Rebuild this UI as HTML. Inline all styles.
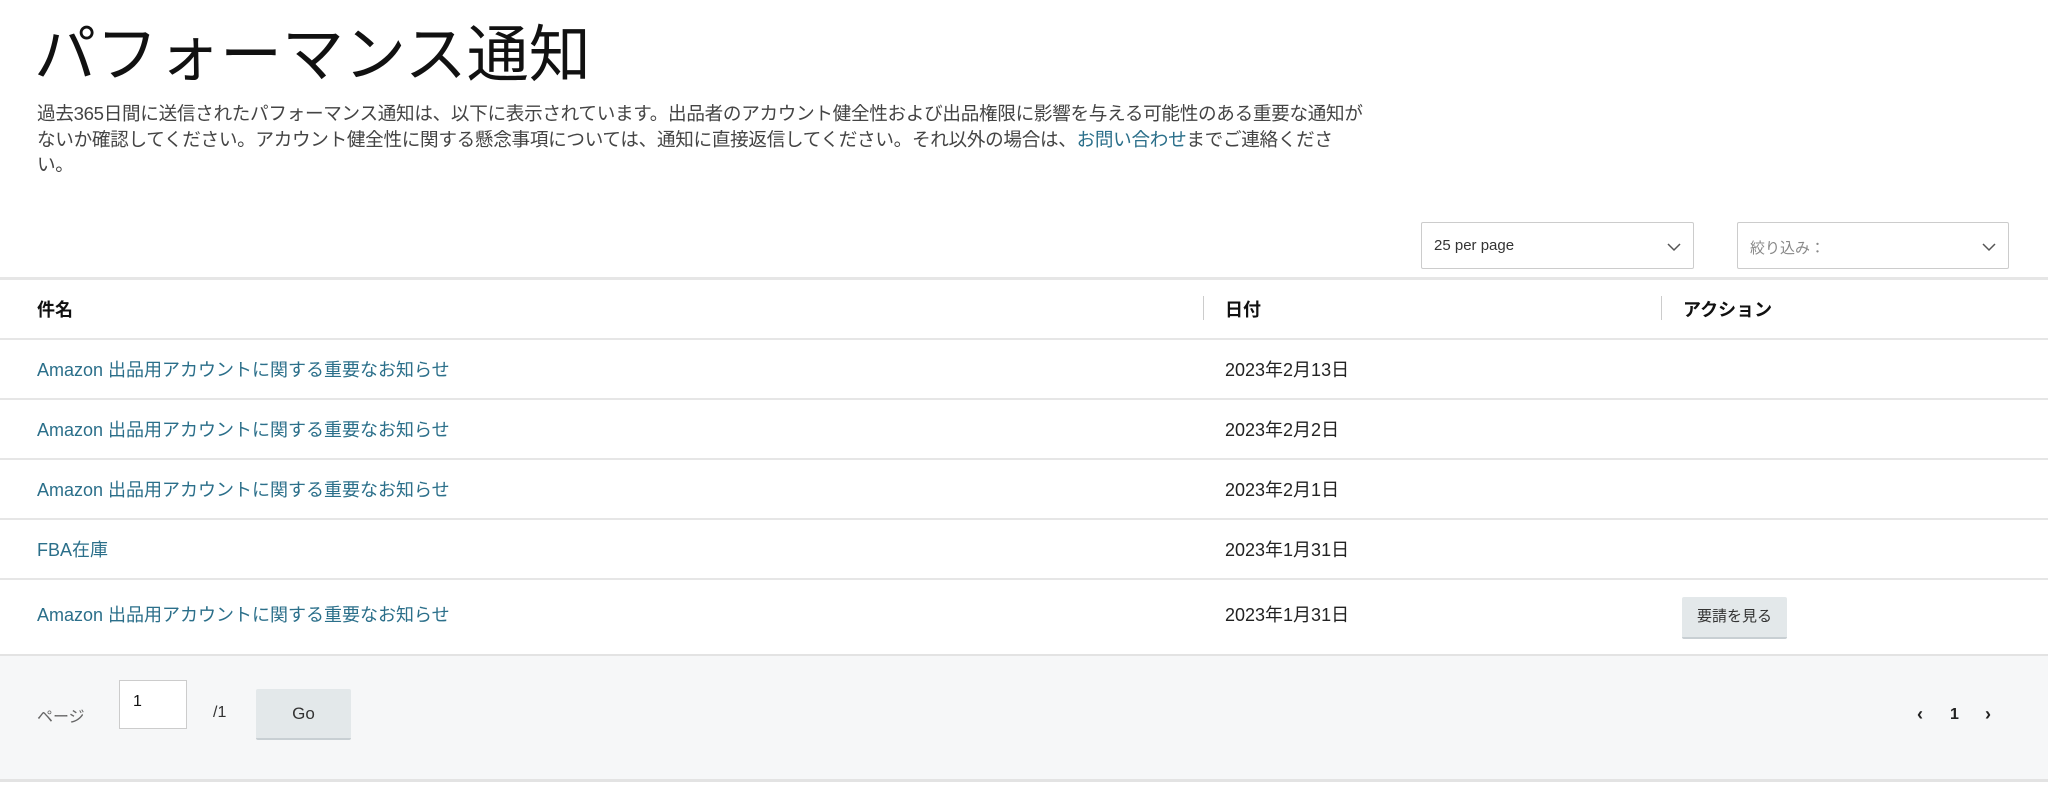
<!DOCTYPE html>
<html><head><meta charset="utf-8"><style>
*{box-sizing:border-box;margin:0;padding:0}
body{width:2048px;height:789px;background:#fff;font-family:"Liberation Sans","Noto Sans CJK JP",sans-serif;color:#111;position:relative;overflow:hidden}
.a{position:absolute}
h1{position:absolute;left:34px;top:4px;font-size:62px;font-weight:400;color:#111;white-space:nowrap}
.desc{left:37px;top:101px;font-size:18.6px;line-height:25.5px;color:#444;letter-spacing:-0.3px;white-space:nowrap}
.desc span{color:#2b6f8a}
.sel{border:1px solid #ccc;height:47px;font-size:15px;color:#333;padding:14px 12px;border-radius:2px}
.sel svg{position:absolute;right:12px;top:19px}
.hl{left:0;width:2048px;height:2px;background:#e6e6e6}
.row{font-size:18px;color:#2b6f8a;left:37px}
.dt{font-size:18px;color:#222;left:1225px}
.btn{background:#e3e8ea;border-bottom:2px solid #c8cfd3;border-radius:2px;font-size:15px;color:#333;text-align:center}
</style></head><body>
<h1>パフォーマンス通知</h1>
<div class="a desc">過去365日間に送信されたパフォーマンス通知は、以下に表示されています。出品者のアカウント健全性および出品権限に影響を与える可能性のある重要な通知が<br>ないか確認してください。アカウント健全性に関する懸念事項については、通知に直接返信してください。それ以外の場合は、<span>お問い合わせ</span>までご連絡くださ<br>い。</div>

<div class="a sel" style="left:1421px;top:222px;width:273px">25 per page<svg width="14" height="10"><path d="M1 2l6 6 6-6" stroke="#555" fill="none" stroke-width="1.5"/></svg></div>
<div class="a sel" style="left:1737px;top:222px;width:272px;color:#888">絞り込み：<svg width="14" height="10"><path d="M1 2l6 6 6-6" stroke="#555" fill="none" stroke-width="1.5"/></svg></div>

<div class="a hl" style="top:277px;height:3px"></div>
<div class="a" style="left:37px;top:296px;font-size:18px;font-weight:700">件名</div>
<div class="a" style="left:1203px;top:296px;width:1px;height:24px;background:#ccc"></div>
<div class="a" style="left:1225px;top:296px;font-size:18px;font-weight:700">日付</div>
<div class="a" style="left:1661px;top:296px;width:1px;height:24px;background:#ccc"></div>
<div class="a" style="left:1683px;top:296px;font-size:18px;font-weight:700">アクション</div>
<div class="a hl" style="top:338px"></div>

<div class="a row" style="top:356px">Amazon 出品用アカウントに関する重要なお知らせ</div><div class="a dt" style="top:356px">2023年2月13日</div>
<div class="a hl" style="top:398px"></div>
<div class="a row" style="top:416px">Amazon 出品用アカウントに関する重要なお知らせ</div><div class="a dt" style="top:416px">2023年2月2日</div>
<div class="a hl" style="top:458px"></div>
<div class="a row" style="top:476px">Amazon 出品用アカウントに関する重要なお知らせ</div><div class="a dt" style="top:476px">2023年2月1日</div>
<div class="a hl" style="top:518px"></div>
<div class="a row" style="top:536px">FBA在庫</div><div class="a dt" style="top:536px">2023年1月31日</div>
<div class="a hl" style="top:578px"></div>
<div class="a row" style="top:601px">Amazon 出品用アカウントに関する重要なお知らせ</div><div class="a dt" style="top:601px">2023年1月31日</div>
<div class="a btn" style="left:1682px;top:597px;width:105px;height:42px;line-height:40px">要請を見る</div>

<div class="a" style="left:0;top:654px;width:2048px;height:128px;background:#f6f7f8;border-top:2px solid #e3e3e3;border-bottom:3px solid #e3e3e3"></div>
<div class="a" style="left:37px;top:703px;font-size:16px;color:#666">ページ</div>
<div class="a" style="left:119px;top:680px;width:68px;height:49px;background:#fff;border:1px solid #ccc;font-size:16px;padding:12px 13px">1</div>
<div class="a" style="left:213px;top:704px;font-size:16px;color:#333">/1</div>
<div class="a btn" style="left:256px;top:689px;width:95px;height:51px;line-height:49px;font-size:17px">Go</div>
<div class="a" style="left:1917px;top:704px;font-size:18px;font-weight:700;color:#222">‹</div>
<div class="a" style="left:1950px;top:706px;font-size:16px;font-weight:700;color:#222">1</div>
<div class="a" style="left:1985px;top:704px;font-size:18px;font-weight:700;color:#222">›</div>
</body></html>
